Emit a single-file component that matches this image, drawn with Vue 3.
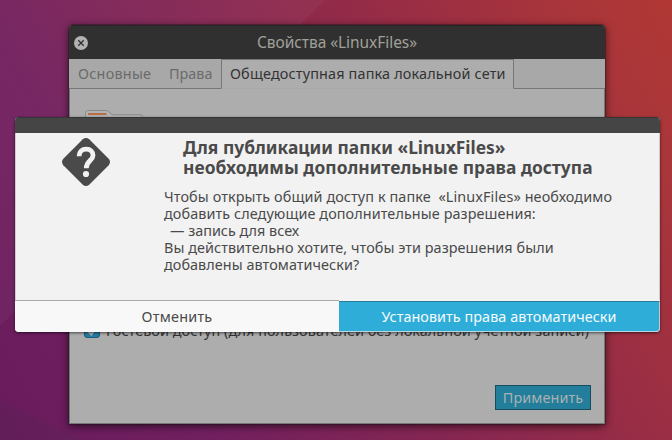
<script setup>
const tabs = [
  { label: 'Основные', cls: 'tab-general' },
  { label: 'Права', cls: 'tab-rights' },
  { label: 'Общедоступная папка локальной сети', cls: 'tab-share active' },
]
const heading = [
  { text: 'Для публикации папки «LinuxFiles»', cls: 'h1' },
  { text: 'необходимы дополнительные права доступа', cls: 'h2' },
]
const lines = [
  { text: 'Чтобы открыть общий доступ к папке\u00a0 «LinuxFiles» необходимо', cls: 'l1' },
  { text: 'добавить следующие дополнительные разрешения:', cls: 'l2' },
  { text: '— запись для всех', cls: 'l3' },
  { text: 'Вы действительно хотите, чтобы эти разрешения были', cls: 'l4' },
  { text: 'добавлены автоматически?', cls: 'l5' },
]
</script>

<template>
  <main class="desktop">
    <svg class="wallpaper" viewBox="0 0 672 440" aria-hidden="true">
      <polygon points="0,0 325,0 0,326" fill="#fff" opacity="0.035" />
      <polygon points="0,401 82,440 0,440" fill="#3a3a4a" opacity="0.12" />
    </svg>

    <section class="window">
      <header class="titlebar">
        <button class="close" aria-label="Закрыть">
          <svg viewBox="0 0 14 14"><circle cx="7" cy="7" r="7" fill="#b2b2b2" /><path d="M4.300 4.300l5.400 5.400M9.700 4.300l-5.400 5.400" stroke="#303030" stroke-width="1.3" /></svg>
        </button>
        <h1><span>Свойства «LinuxFiles»</span></h1>
      </header>
      <nav class="tabs">
        <div v-for="t in tabs" :key="t.label" class="tab" :class="t.cls"><span>{{ t.label }}</span></div>
        <div class="tab-rest"></div>
      </nav>
      <div class="content">
        <svg class="folder" viewBox="0 0 60 40">
          <path d="M1.500 40V3.500q0-2 2-2H22q1.500 0 2.500 1L28 5.700H56q2.500 0 2.500 2V40" fill="#b2b2b2" stroke="#8b8b8b" />
          <path d="M4 5H22.500" stroke="#b96f48" stroke-width="2" />
        </svg>
        <label class="guest">
          <svg viewBox="0 0 16 16"><rect x=".5" y=".5" width="15" height="15" rx="2.500" fill="#247ba4" stroke="#1d5b78" /><path d="M3.500 8.500l3.800 3.800 5.200-7" fill="none" stroke="#b2b2b2" stroke-width="2.200" /></svg>
          <span>Гостевой доступ (для пользователей без локальной учётной записи)</span>
        </label>
        <button class="apply"><span>Применить</span></button>
      </div>
    </section>

    <section class="dialog">
      <div class="dialog-bar"></div>
      <div class="dialog-body">
        <svg class="question" viewBox="0 0 48 48">
          <path d="M20.800 1.300Q24-1.300 27.200 1.300L46.700 20.800Q49.300 24 46.700 27.200L27.200 46.700Q24 49.300 20.800 46.700L1.300 27.200Q-1.300 24 1.300 20.800Z" fill="#4a4a4a" />
          <path d="M17.100 18.200C17.100 13.500 20 11.200 24.300 11.200C28.500 11.200 31 13.800 31 17.500C31 22.700 24.300 22.800 24.300 30.200" fill="none" stroke="#f2f2f2" stroke-width="4.800" />
          <circle cx="24" cy="36" r="3.100" fill="#f2f2f2" />
        </svg>
        <div class="message">
          <h2><span v-for="h in heading" :key="h.cls" :class="h.cls">{{ h.text }}</span></h2>
          <p><span v-for="l in lines" :key="l.cls" :class="l.cls">{{ l.text }}</span></p>
        </div>
      </div>
      <footer class="actions">
        <button class="cancel"><span>Отменить</span></button>
        <button class="confirm"><span>Установить права автоматически</span></button>
      </footer>
    </section>
  </main>
</template>

<style>
body { margin: 0; overflow: hidden; }
</style>

<style scoped>
* { box-sizing: border-box; }
.desktop {
  position: relative;
  width: 672px;
  height: 440px;
  overflow: hidden;
  font: 14.4px/17px "Noto Sans", "Open Sans", sans-serif;
  background: linear-gradient(60deg, #681b5c 0%, #72205f 24%, #8a284f 54%, #9b2e43 73%, #a8353b 87%, #b13834 100%);
}
.wallpaper { display: block; width: 672px; height: 440px; }
button { margin: 0; padding: 0; border: 0; font: inherit; white-space: nowrap; }
span { white-space: nowrap; }
.window {
  position: absolute;
  left: 69px;
  top: 25px;
  width: 536px;
  height: 399px;
  display: flex;
  flex-direction: column;
  border-radius: 4px 4px 0 0;
  background: #adadad;
  box-shadow: 0 0 0 1px rgba(35, 20, 30, .4), 0 2px 9px rgba(0, 0, 0, .65);
}
.titlebar {
  flex: none;
  height: 34px;
  display: grid;
  grid-template-columns: 24px 1fr 24px;
  align-items: center;
  border-radius: 4px 4px 0 0;
  background: #303030;
  border-top: 1px solid #252525;
}
.close { display: block; width: 14px; height: 14px; margin-left: 5px; background: none; }
.close svg { display: block; width: 14px; height: 14px; }
h1 { margin: 0; padding-bottom: 2px; text-align: center; font-size: 15.5px; font-weight: 400; line-height: 20px; color: #a1a099; letter-spacing: -.05px; }
.tabs { flex: none; display: flex; height: 30px; background: #a8a8a8; color: #6b6b6b; }
.tab { display: flex; align-items: center; border-bottom: 1px solid #777; }
.tab-general { width: 91px; padding-left: 9px; letter-spacing: .25px; }
.tab-rights { width: 61px; padding-left: 9px; }
.tab-share { width: 293px; padding: 0 0 1px 8px; letter-spacing: .17px; }
.tab.active { background: #adadad; color: #333; border: 1px solid #777; border-bottom-color: #a9a9a9; }
.tab-rest { flex: 1; border-bottom: 1px solid #777; }
.content {
  flex: 1;
  display: flex;
  flex-direction: column;
  padding: 20px 13px 13px 14px;
  border: 1px solid #777;
  border-top: 0;
}
.folder { flex: none; width: 60px; height: 40px; }
.guest { display: flex; align-items: center; gap: 6px; margin-top: 171px; height: 20px; color: #333; letter-spacing: .06px; }
.guest svg { flex: none; width: 16px; height: 16px; }
.apply { align-self: flex-end; margin-top: auto; width: 96px; height: 25px; border: 1px solid #174c5c; background: #237e9b; color: #a9b1b3; letter-spacing: .1px; }
.dialog {
  position: absolute;
  left: 15px;
  top: 117px;
  width: 645px;
  height: 215px;
  display: flex;
  flex-direction: column;
  border-radius: 4px;
  overflow: hidden;
  background: #f2f2f2;
  color: #4a4a4a;
  box-shadow: 0 1px 3px rgba(0, 0, 0, .6);
}
.dialog-bar { flex: none; height: 16px; background: #454545; border-top: 1px solid #353535; }
.dialog-body { flex: 1; display: flex; padding: 4px 0 0 46px; border: 1px solid #ccc; border-top: 0; border-bottom: 0; }
.question { flex: none; width: 48px; height: 48px; margin-top: 1px; }
.message { margin-left: 54px; }
h2 { display: flex; flex-direction: column; margin: 0 0 0 19px; font-size: 17.4px; line-height: 20px; font-weight: 700; }
p { display: flex; flex-direction: column; margin: 11px 0 0; }
h2 span, p span { align-self: flex-start; }
.h2 { letter-spacing: .04px; }
.l1 { letter-spacing: .1px; }
.l2 { letter-spacing: .09px; }
.l3 { padding-left: 6px; }
.l4 { letter-spacing: .06px; }
.l5 { letter-spacing: .06px; }
.actions { flex: none; display: flex; height: 32px; }
.cancel { width: 324px; background: #f8f8f8; color: #4a4a4a; border-top: 1px solid #a8a8a8; letter-spacing: .25px; }
.confirm { flex: 1; margin-top: 1px; background: #2fadd9; color: #f5fbfd; letter-spacing: .05px; border-top: 1px solid #267d97; border-right: 1px solid #c6c6c6; border-bottom: 1px solid #b8d8e2; border-radius: 0 0 4px 0; }
</style>
